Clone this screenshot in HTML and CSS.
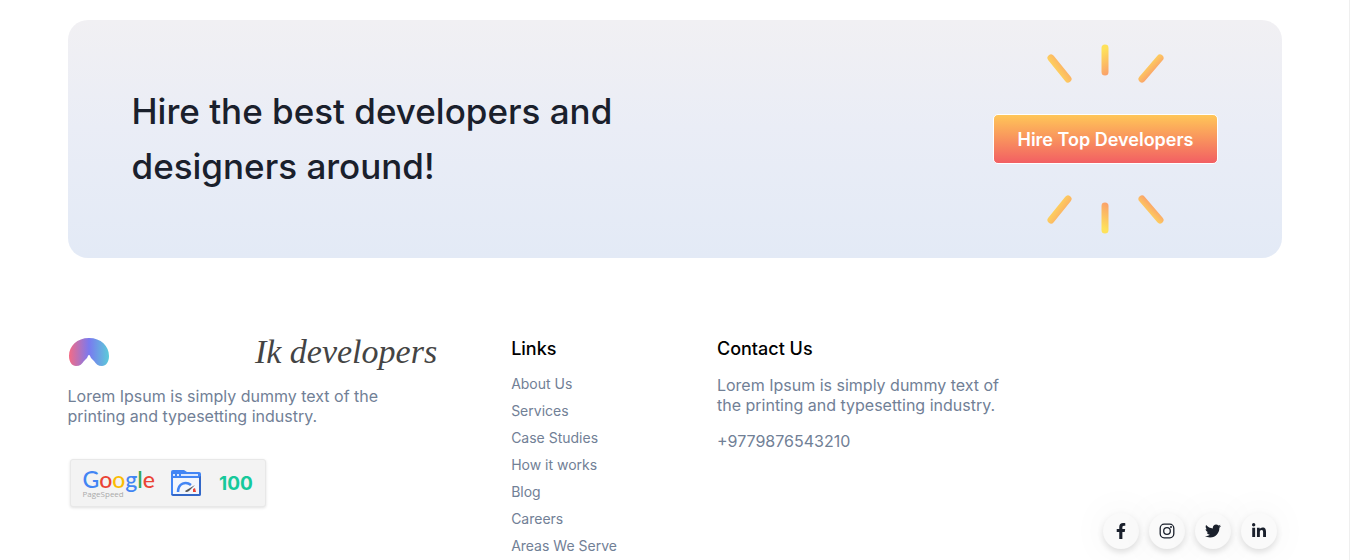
FILE: index.html
```html
<!DOCTYPE html>
<html lang="en">
<head>
<meta charset="utf-8">
<meta name="viewport" content="width=device-width, initial-scale=1">
<title>IK developers</title>
<link rel="stylesheet" href="styles.css">
</head>
<body>
<main class="page">
  <section class="hero">
    <h1 class="hero-title">Hire the best developers and designers around!</h1>
    <div class="hero-action">
      <svg class="rays" viewBox="0 0 118 40" aria-hidden="true">
        <defs>
          <linearGradient id="ray-l" gradientUnits="userSpaceOnUse" x1="8" y1="28" x2="22" y2="18"><stop offset="0" stop-color="#fed85b"/><stop offset="1" stop-color="#fa9f6b"/></linearGradient>
          <linearGradient id="ray-b" gradientUnits="userSpaceOnUse" x1="53" y1="8" x2="66" y2="31"><stop offset="0" stop-color="#fee15a"/><stop offset="1" stop-color="#fa9a6c"/></linearGradient>
          <linearGradient id="ray-c" gradientUnits="userSpaceOnUse" x1="99" y1="18" x2="110" y2="29"><stop offset="0" stop-color="#fee15a"/><stop offset="1" stop-color="#fa9a6c"/></linearGradient>
        </defs>
        <g fill="none" stroke-width="7" stroke-linecap="round">
          <path stroke="url(#ray-l)" d="M5 14 22 35"/>
          <path stroke="url(#ray-b)" d="M59 4 59.010 28"/>
          <path stroke="url(#ray-c)" d="M114 14 96 35"/>
        </g>
      </svg>
      <button class="hire" type="button">Hire Top Developers</button>
      <svg class="rays rays-below" viewBox="0 0 118 40" aria-hidden="true">
        <g fill="none" stroke-width="7" stroke-linecap="round">
          <path stroke="url(#ray-l)" d="M5 14 22 35"/>
          <path stroke="url(#ray-b)" d="M59 4 59.010 28"/>
          <path stroke="url(#ray-c)" d="M114 14 96 35"/>
        </g>
      </svg>
    </div>
  </section>

  <footer class="footer">
    <section class="about">
      <div class="brand">
        <svg class="brand-mark" viewBox="0 0 42 30" aria-hidden="true">
          <defs><linearGradient id="mark"><stop offset="0" stop-color="#f46b85"/><stop offset=".5" stop-color="#7a79ef"/><stop offset="1" stop-color="#5bcbd9"/></linearGradient></defs>
          <path fill="url(#mark)" d="M21 1C9 1 1 9 1 19c0 6 3 10 7 10 4 0 6-2 8-5l3-3c1-2 1-3 2-3s1 1 2 3l3 3c2 3 4 5 8 5s7-4 7-10C41 9 33 1 21 1z"/>
        </svg>
        <span class="brand-name">Ik developers</span>
      </div>
      <p class="text">Lorem Ipsum is simply dummy text of the printing and typesetting industry.</p>
      <div class="speed">
        <div class="speed-brand">
          <div class="google"><span class="blue">G</span><span class="red">o</span><span class="yellow">o</span><span class="blue">g</span><span class="green">l</span><span class="red">e</span></div>
          <div class="pagespeed">PageSpeed</div>
        </div>
        <svg class="speed-icon" viewBox="0 0 32 28" aria-hidden="true">
          <path fill="#4285f4" d="M3 1h11l3 2h12q2 0 2 2v20q0 2-2 2H3q-2 0-2-2V3q0-2 2-2z"/>
          <path fill="#3367c7" d="M29 27H3l-2-2h28V8l2-1v18q0 2-2 2z"/>
          <path fill="#f3f6fc" d="M3 9h26v16H3z"/>
          <path fill="#dbe8ff" d="M3 5h2v2H3zm4 0h2v2H7zm4 0h17v2H11z"/>
          <path fill="none" stroke="#4285f4" stroke-width="2.500" d="M8 23c0-9 8-11 13-7"/>
          <path fill="#555" d="m25 16-6 6q-3 2-4 0z"/>
          <path fill="#ea4335" d="m23 20 2-1 1 4h-3z"/>
        </svg>
        <strong class="score">100</strong>
      </div>
    </section>

    <nav class="links" aria-labelledby="links-title">
      <h2 class="heading" id="links-title">Links</h2>
      <ul class="link-list">
        <li><a href="#about">About Us</a></li>
        <li><a href="#services">Services</a></li>
        <li><a href="#cases">Case Studies</a></li>
        <li><a href="#how">How it works</a></li>
        <li><a href="#blog">Blog</a></li>
        <li><a href="#careers">Careers</a></li>
        <li><a href="#areas">Areas We Serve</a></li>
      </ul>
    </nav>

    <section class="contact">
      <h2 class="heading">Contact Us</h2>
      <p class="text">Lorem Ipsum is simply dummy text of the printing and typesetting industry.</p>
      <p class="text phone">+9779876543210</p>
    </section>

    <div class="social">
      <a href="#facebook" aria-label="Facebook"><svg viewBox="0 0 320 512"><path d="M279 288l14-93h-89v-60c0-25 12-50 52-50h41V7s-37-7-72-7c-73 0-121 44-121 125v70H23v93h81v224h100V288z"/></svg></a>
      <a href="#instagram" aria-label="Instagram"><svg viewBox="0 0 16 16"><g fill="none" stroke="#1a202c" stroke-width="1.300"><rect x="1.200" y="1.200" width="13.600" height="13.600" rx="4"/><circle cx="8" cy="8" r="3.300"/></g><circle cx="12" cy="4" r="1"/></svg></a>
      <a href="#twitter" aria-label="Twitter"><svg viewBox="0 0 512 512"><path d="M459.370 151.716c.325 4.548.325 9.097.325 13.645 0 138.720-105.583 298.558-298.558 298.558-59.452 0-114.680-17.219-161.137-47.106 8.447.974 16.568 1.299 25.340 1.299 49.055 0 94.213-16.568 130.274-44.832-46.132-.975-84.792-31.188-98.112-72.772 6.498.974 12.995 1.624 19.818 1.624 9.421 0 18.843-1.300 27.614-3.573-48.081-9.747-84.143-51.980-84.143-102.985v-1.299c13.969 7.797 30.214 12.670 47.431 13.319-28.264-18.843-46.781-51.005-46.781-87.391 0-19.492 5.197-37.360 14.294-52.954 51.655 63.675 129.300 105.258 216.365 109.807-1.624-7.797-2.599-15.918-2.599-24.040 0-57.828 46.782-104.934 104.934-104.934 30.213 0 57.502 12.670 76.670 33.137 23.715-4.548 46.456-13.320 66.599-25.340-7.798 24.366-24.366 44.833-46.132 57.827 21.117-2.273 41.584-8.122 60.426-16.243-14.292 20.791-32.161 39.308-52.628 54.253z"/></svg></a>
      <a href="#linkedin" aria-label="LinkedIn"><svg viewBox="0 0 448 512"><path d="M100.300 448H7.400V148.900h92.900zM53.800 108.100C24.100 108.100 0 83.500 0 53.800a53.800 53.800 0 0 1 107.600 0c0 29.700-24.100 54.300-53.800 54.300zM447.900 448h-92.700V302.400c0-34.700-.7-79.200-48.300-79.200-48.300 0-55.700 37.700-55.700 76.700V448h-92.800V148.900h89.100v40.800h1.300c12.400-23.500 42.700-48.300 87.900-48.300 94 0 111.300 61.900 111.300 142.300V448z"/></svg></a>
    </div>
  </footer>
</main>
</body>
</html>
```
FILE: styles.css
```css
* { box-sizing: border-box; }

body {
  margin: 0;
  background: #fff;
  color: #1a202c;
  font-family: Inter, "Liberation Sans", sans-serif;
}

.page {
  min-height: 100vh;
  padding: 20px 5% 0;
  border-right: 1px solid #efefef;
}

.hero {
  display: flex;
  align-items: center;
  justify-content: space-between;
  min-height: 238px;
  padding: 20px 64px;
  border-radius: 20px;
  background: linear-gradient(#f1f0f3, #eaedf6 45%, #e3eaf6);
}

.hero-title {
  max-width: 520px;
  margin: 0;
  font-size: 35px;
  font-weight: 500;
  line-height: 55px;
}

.hero-action {
  display: flex;
  flex-direction: column;
  align-items: center;
  gap: 30px;
}

.rays { display: block; width: 118px; height: 40px; }
.rays-below { transform: scaleY(-1); }

.hire {
  height: 50px;
  padding: 0 23px;
  border: 1px solid #fff;
  border-radius: 5px;
  background: linear-gradient(#ffc658, #f25f63);
  color: #fff;
  font: 600 18px Inter, "Liberation Sans", sans-serif;
}

.footer {
  display: grid;
  grid-template-columns: 444fr 206fr 305fr 260fr;
  padding-top: 79px;
}

.about { padding-right: 74px; }

.brand {
  display: flex;
  justify-content: space-between;
  align-items: flex-start;
  height: 34px;
}

.brand-mark { width: 42px; height: 30px; }

.brand-name {
  color: #444;
  font: italic 34px/30px "Liberation Serif", serif;
}

.text {
  margin: 0;
  color: #718096;
  font-size: 16px;
  line-height: 20px;
}

.about .text { max-width: 330px; margin-top: 15px; }

.speed {
  display: inline-flex;
  align-items: center;
  gap: 15px;
  height: 48px;
  margin: 33px 0 0 2px;
  padding: 0 12px;
  border: 1px solid #e8e8e8;
  border-radius: 3px;
  background: #f3f3f3;
  box-shadow: 0 1px 3px #0000001f;
}

.google {
  font: 500 23px/22px Lato, sans-serif;
}

.pagespeed {
  color: #aaa;
  font: 8px/8px "Open Sans", sans-serif;
}

.blue { color: #4285f4; }
.red { color: #ea4335; }
.yellow { color: #fbbc05; }
.green { color: #34a853; }

.speed-icon { width: 32px; height: 28px; }

.score {
  margin-left: 2px;
  color: #16c99b;
  font-size: 19px;
  font-weight: 700;
}

.heading {
  margin: 0;
  color: #000;
  font-size: 18px;
  font-weight: 500;
  line-height: 24px;
}

.link-list {
  margin: 9px 0 0;
  padding: 0;
  list-style: none;
  font-size: 14px;
  line-height: 27px;
}

.link-list a { color: #718096; text-decoration: none; }

.contact .text { max-width: 290px; margin-top: 14px; }
.contact .phone { margin-top: 16px; }

.social {
  display: flex;
  align-self: end;
  justify-content: flex-end;
  gap: 10px;
  padding: 0 5px 10px 0;
}

.social a {
  display: grid;
  place-items: center;
  width: 36px;
  height: 36px;
  border-radius: 50%;
  background: #fafafa;
  box-shadow: 0 3px 6px #0000001f, 0 0 40px #0000000f;
}

.social svg { width: 16px; height: 16px; fill: #1a202c; }
```
